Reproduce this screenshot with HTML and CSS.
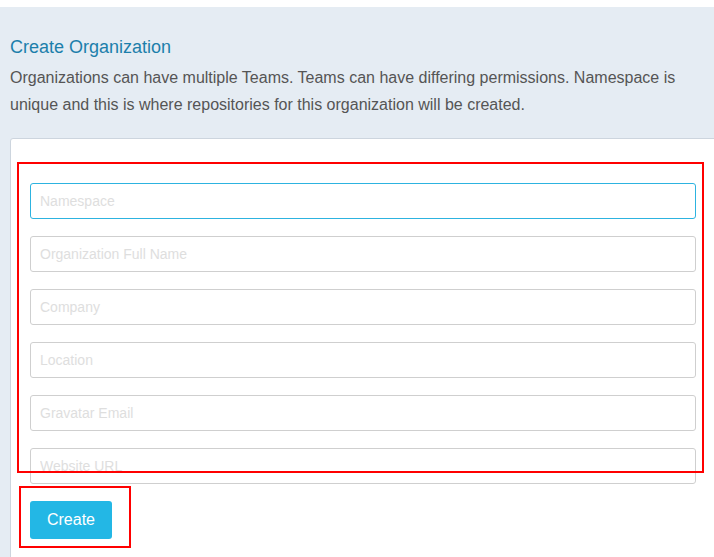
FILE: index.html
```html
<!DOCTYPE html>
<html>
<head>
<meta charset="utf-8">
<link rel="stylesheet" href="styles.css">
</head>
<body>
<div class="page">
  <div class="panel">
    <div class="header">
      <h1 class="title">Create Organization</h1>
      <p class="desc">Organizations can have multiple Teams. Teams can have differing permissions. Namespace is unique and this is where repositories for this organization will be created.</p>
    </div>
    <div class="card">
      <form class="form">
        <input class="field focused" type="text" placeholder="Namespace">
        <input class="field" type="text" placeholder="Organization Full Name">
        <input class="field" type="text" placeholder="Company">
        <input class="field" type="text" placeholder="Location">
        <input class="field" type="text" placeholder="Gravatar Email">
        <input class="field" type="text" placeholder="Website URL">
        <button class="btn" type="button">Create</button>
      </form>
    </div>
  </div>
  <div class="mark mark-fields"></div>
  <div class="mark mark-button"></div>
</div>
</body>
</html>
```

FILE: styles.css
```css
html, body {
  margin: 0;
  padding: 0;
  background: #ffffff;
  overflow: hidden;
}
.page {
  position: relative;
  width: 714px;
  height: 557px;
  overflow: hidden;
  font-family: "Liberation Sans", Arial, sans-serif;
}
.panel {
  margin-top: 7px;
  background: #e5ecf3;
  height: 550px;
  overflow: hidden;
}
.header {
  padding: 29px 0 0 10px;
  height: 131px;
  box-sizing: border-box;
}
.title {
  margin: 0;
  font-size: 18px;
  line-height: 22px;
  font-weight: normal;
  color: #1c7fab;
}
.desc {
  margin: 6px 0 0 0;
  max-width: 680px;
  font-size: 16px;
  line-height: 27px;
  color: #555555;
}
.card {
  margin-left: 10px;
  width: 760px;
  height: 430px;
  background: #ffffff;
  border: 1px solid #cdd5de;
  border-radius: 3px 0 0 0;
  box-sizing: border-box;
  padding: 44px 0 0 19px;
}
.form {
  display: flex;
  flex-direction: column;
  align-items: flex-start;
  gap: 17px;
}
.field {
  display: block;
  width: 666px;
  height: 36px;
  box-sizing: border-box;
  margin: 0;
  padding: 0 9px;
  border: 1px solid #cfcfcf;
  border-radius: 3px;
  font-family: "Liberation Sans", Arial, sans-serif;
  font-size: 14px;
  color: #555;
  background: #fff;
  outline: none;
}
.field::placeholder {
  color: #dedede;
}
.field.focused {
  border-color: #2db3e0;
}
.btn {
  width: 82px;
  height: 38px;
  margin: 0;
  padding: 0;
  border: none;
  border-radius: 3px;
  background: #23b7e5;
  color: #ffffff;
  font-family: "Liberation Sans", Arial, sans-serif;
  font-size: 16px;
}
.mark {
  position: absolute;
  border: 2px solid #ff0000;
  box-sizing: border-box;
  pointer-events: none;
}
.mark-fields {
  left: 17px;
  top: 162px;
  width: 687px;
  height: 311px;
}
.mark-button {
  left: 19px;
  top: 486px;
  width: 112px;
  height: 62px;
}
```
